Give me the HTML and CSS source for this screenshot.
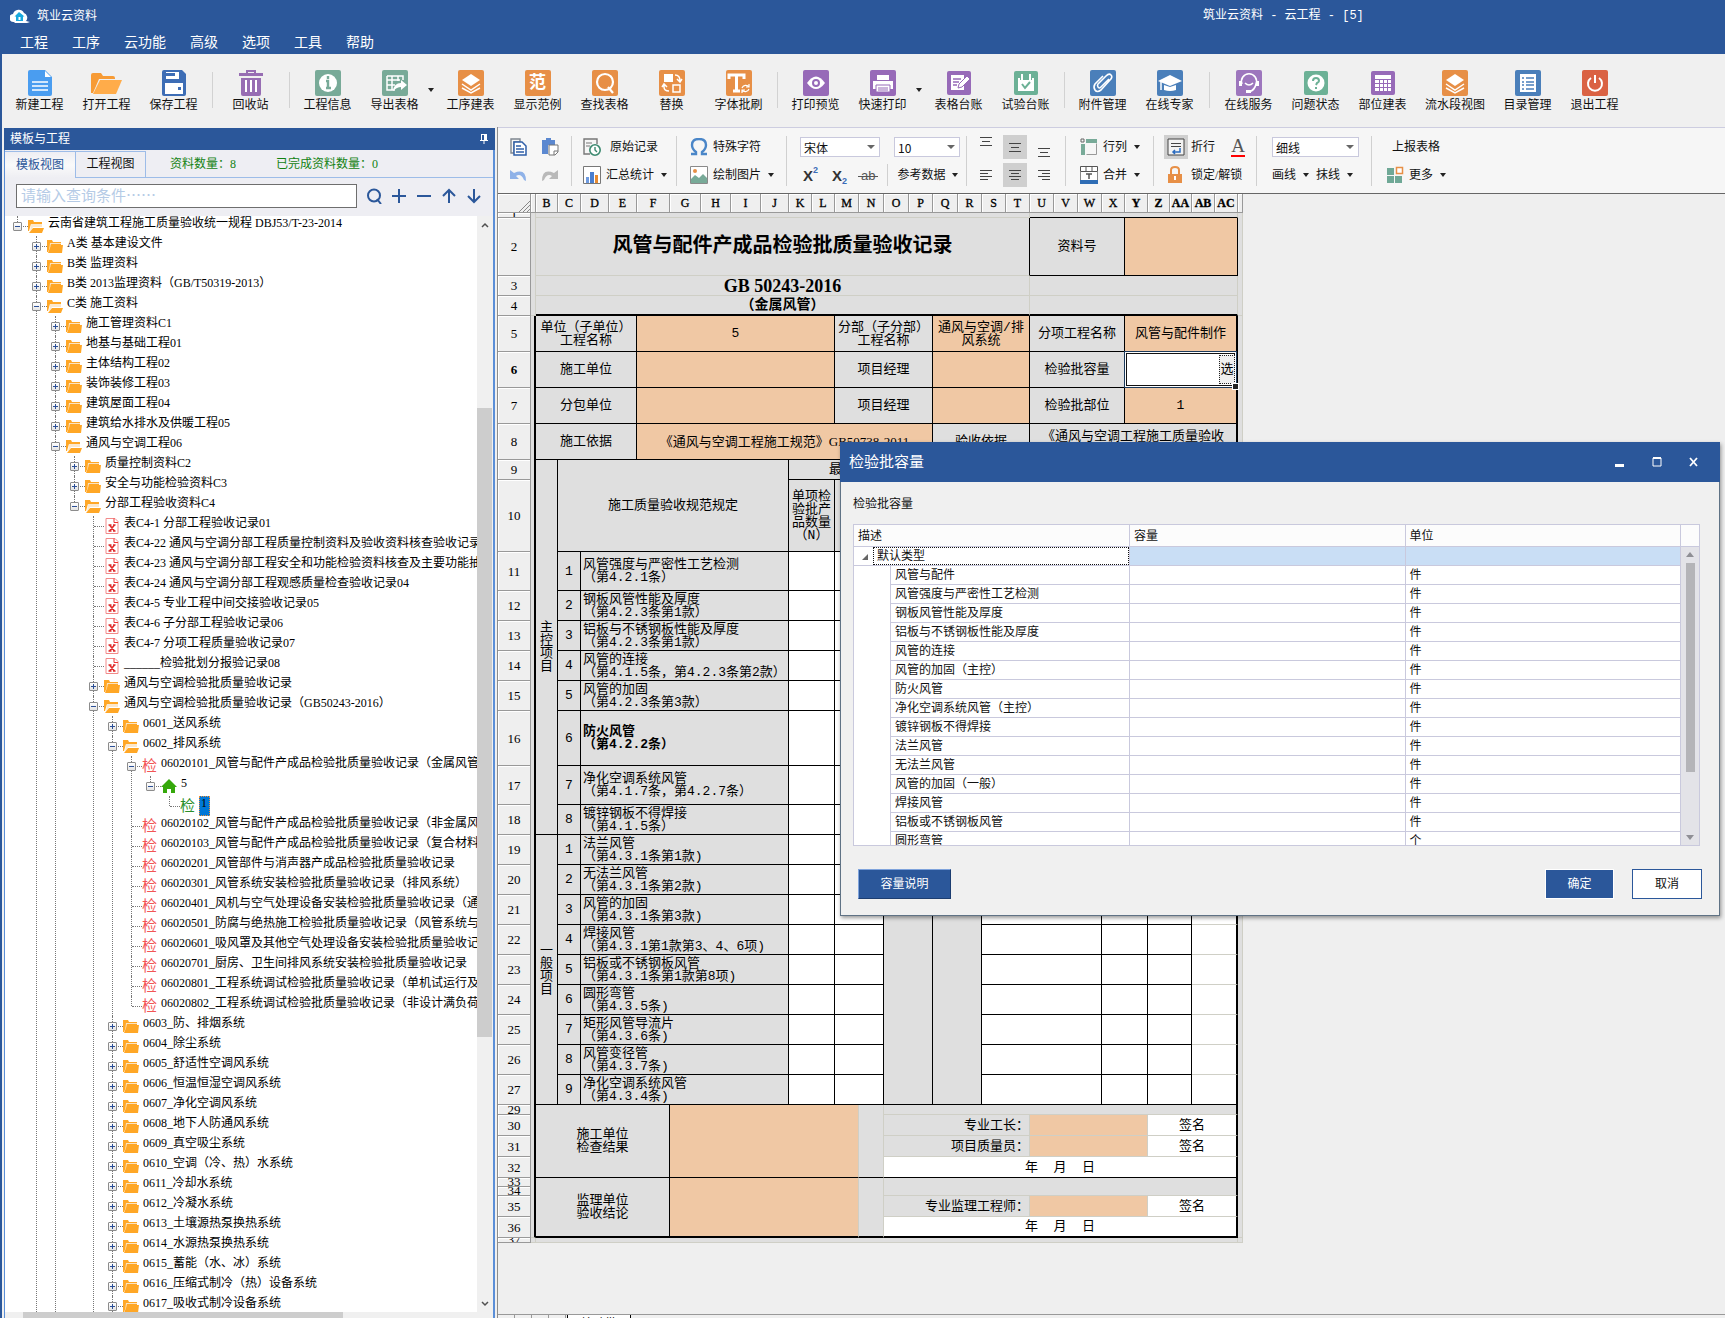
FILE: index.html
```html
<!DOCTYPE html>
<html lang="zh-CN">
<head>
<meta charset="utf-8">
<title>筑业云资料</title>
<link rel="stylesheet" href="styles.css">
</head>
<body>
<svg class="sprite" aria-hidden="true">
  <symbol id="closed" viewBox="0 0 16 14"><path d="M0 1h5l1 2h8v3H4L1 13H0z" fill="#ffa726"/><path d="M3 4h11v1H4L2 12z" fill="#fbe3bf"/><path d="M4 6h12l-1 8H1z" fill="#ffa726"/></symbol>
  <symbol id="open" viewBox="0 0 16 14"><path d="M0 1h5l1 2h8v2H3L1 12H0z" fill="#ffa726"/><path d="M3 5h11v3H5l-3 5z" fill="#fbe8cd"/><path d="M5 9h11l-2 5H1z" fill="#ffa726"/></symbol>
  <symbol id="xfile" viewBox="0 0 16 16"><path d="M2 .5h9l3 3v12H2z" fill="#fff" stroke="#f28a8a"/><path d="M10 .5v4h4" fill="none" stroke="#e33"/><path d="M5.500 7l5 6M10.500 7l-5 6M4.500 7h3M9 7h2.500M4.500 13h3M9 13h2.500" stroke="#e02a2a" stroke-width="1.600"/></symbol>
  <symbol id="home" viewBox="0 0 16 16"><path d="M8 1L0 9h2v6h4v-4h4v4h4V9h2z" fill="#35a80b"/></symbol>
</svg>

<header class="titlebar">
  <div class="caption">
    <svg class="logo" viewBox="0 0 20 15"><path d="M4 13a4 4 0 0 1-1-8 6 6 0 0 1 11-1 5 5 0 0 1 2 8l4 1-3 1H5z" fill="#fff"/><path d="M9 3L4.500 7.500H6V12h7V7.500h1.500z" fill="#19a9de"/><path d="M8.500 8h2v3h-2z" fill="#fff"/></svg>
    <span class="app">筑业云资料</span>
    <span class="doc">筑业云资料 - 云工程 - [5]</span>
  </div>
  <nav class="menu">
    <button>工程</button><button>工序</button><button>云功能</button><button>高级</button><button>选项</button><button>工具</button><button>帮助</button>
  </nav>
</header>

<div class="ribbon">
  <button class="tool"><svg viewBox="0 0 26 26"><path d="M1 2q0-2 2-2h15l7 7v17q0 2-2 2H3q-2 0-2-2z" fill="#4a9df0"/><path d="M18 1v6h6z" fill="#fff"/><path d="M5 12h16M5 16h16M5 20h16" stroke="#fff" stroke-width="1.500"/></svg>新建工程</button>
  <button class="tool"><svg class="wide" viewBox="0 0 32 26"><path d="M0 5q0-2 2-2h8l2 3h10q2 0 2 2v1H8L2 23H0z" fill="#f79b35"/><path d="M9 10h22l-6 14H2z" fill="#ffac4a"/></svg>打开工程</button>
  <button class="tool"><svg viewBox="0 0 26 26"><path d="M1 2q0-2 2-2h18l4 4v20q0 2-2 2H3q-2 0-2-2z" fill="#3d6db5"/><path d="M5 2h13v7H5zM4 13h18v11H4z" fill="#fff"/><path d="M5 3h9v3H5zM17 17h3v3h-3z" fill="#3d6db5"/></svg>保存工程</button>
  <i class="bar"></i>
  <button class="tool"><svg viewBox="0 0 26 26"><path d="M3 8h20v16q0 2-2 2H5q-2 0-2-2z" fill="#976db3"/><path d="M9 4V1h8v3" fill="none" stroke="#976db3" stroke-width="2"/><path d="M1 3h24v3H1z" fill="#976db3"/><path d="M8 10v12M13 10v12M18 10v12" stroke="#fff" stroke-width="2"/></svg>回收站</button>
  <i class="bar"></i>
  <button class="tool"><svg viewBox="0 0 26 26"><rect width="26" height="26" rx="2" fill="#78aa98"/><circle cx="13" cy="13" r="9" fill="#fff"/><path d="M13 6v3M11 11h2v7M11 18h5" stroke="#78aa98" stroke-width="2.400" fill="none"/></svg>工程信息</button>
  <button class="tool"><svg viewBox="0 0 26 26"><rect width="26" height="26" rx="2" fill="#78aa98"/><path d="M5 6h16v4M5 6v14h8M5 10h13M5 15h8M10 6v14M16 6v5" stroke="#fff" stroke-width="1.500" fill="none"/><path d="M11 21q1-8 8-8v-3l6 5-6 5v-3q-4 0-8 4z" fill="#fff"/></svg>导出表格</button>
  <i class="drop"></i>
  <button class="tool"><svg viewBox="0 0 26 26"><rect width="26" height="26" rx="2" fill="#e78f46"/><path d="M13 4l9 6-9 6-9-6z" fill="#fff"/><path d="M4 14l9 6 9-6M4 18l9 5 9-5" stroke="#fff" stroke-width="1.500" fill="none"/></svg>工序建表</button>
  <button class="tool"><span class="glyph">范</span>显示范例</button>
  <button class="tool"><svg viewBox="0 0 26 26"><rect width="26" height="26" rx="2" fill="#e78f46"/><circle cx="13" cy="12" r="8" fill="none" stroke="#fff" stroke-width="2.200"/><path d="M16 17l5 6" stroke="#fff" stroke-width="2.200"/></svg>查找表格</button>
  <button class="tool"><svg viewBox="0 0 26 26"><rect width="26" height="26" rx="2" fill="#e78f46"/><path d="M5 4h9v8H5z" fill="#fff"/><path d="M14 15h7v7h-7zM16 5q5 0 5 6M18 9l3 3 2-3M5 15v2q0 4 5 4M3 17l2-3 3 3" fill="none" stroke="#fff" stroke-width="1.500"/></svg>替换</button>
  <button class="tool"><svg viewBox="0 0 26 26"><rect width="26" height="26" rx="2" fill="#e78f46"/><path d="M3 9V5h15v4M10.500 5v16M7 21h7" fill="none" stroke="#fff" stroke-width="3"/><path d="M16 18a4 4 0 0 1 7-1M23 19a4 4 0 0 1-7 1M23 14v3h-3M16 23v-3h3" fill="none" stroke="#fff" stroke-width="1.200"/></svg>字体批刷</button>
  <i class="bar"></i>
  <button class="tool"><svg viewBox="0 0 26 26"><rect width="26" height="26" rx="2" fill="#976ab8"/><path d="M4 13q9-13 18 0-9 12-18 0z" fill="#fff"/><circle cx="13" cy="13" r="3" fill="#fff" stroke="#976ab8" stroke-width="2"/></svg>打印预览</button>
  <button class="tool"><svg viewBox="0 0 26 26"><rect width="26" height="26" rx="2" fill="#976ab8"/><path d="M7 5h12v5H7zM3 11h20v8H3z" fill="#fff"/><path d="M6 15h14v7H6z" fill="#fff" stroke="#976ab8"/><path d="M8 18h10M8 20h10" stroke="#976ab8"/></svg>快速打印</button>
  <i class="drop"></i>
  <button class="tool"><svg viewBox="0 0 26 26"><rect x="1" y="1" width="24" height="24" rx="2" fill="#976ab8"/><path d="M5 5h13v15H5z" fill="#fff"/><path d="M7 9h8M7 12h6M7 15h4" stroke="#976ab8" stroke-width="1.500"/><path d="M12 18l1-4 8-8 3 3-8 8z" fill="#fff" stroke="#976ab8"/></svg>表格台账</button>
  <button class="tool"><svg viewBox="0 0 26 26"><rect x="1" y="1" width="24" height="24" rx="2" fill="#6cb196"/><path d="M5 8h16v13H5z" fill="#fff"/><path d="M9 3v7M13 7v3M17 3v7" stroke="#6cb196" stroke-width="4"/><path d="M9 4v6M17 4v6" stroke="#fff" stroke-width="2"/><path d="M9 14l3 4 5-6" stroke="#6cb196" stroke-width="2" fill="none"/></svg>试验台账</button>
  <i class="bar"></i>
  <button class="tool"><svg viewBox="0 0 26 26"><rect width="26" height="26" rx="2" fill="#4a7fba"/><path d="M19 9l-8 8q-2 2-3 0t0-3l8-8q3-3 5-1t-1 5l-9 10q-4 3-6 0t0-6l8-8" fill="none" stroke="#fff" stroke-width="1.600"/></svg>附件管理</button>
  <button class="tool"><svg viewBox="0 0 26 26"><rect width="26" height="26" rx="2" fill="#4a7fba"/><path d="M13 5l12 6-12 5L1 11z" fill="#fff"/><path d="M7 15v5q6 2 12 0v-5l-6 2z" fill="#fff"/><path d="M4 12v8" stroke="#fff" stroke-width="1.500"/></svg>在线专家</button>
  <i class="bar late"></i>
  <button class="tool"><svg viewBox="0 0 26 26"><rect width="26" height="26" rx="2" fill="#9d76bd"/><path d="M6 14a7.500 7.500 0 1 1 14 0q-1 6-7 8M9 13q4 4 8 0" fill="none" stroke="#fff" stroke-width="1.600"/><path d="M3 11h3v5H3zM20 11h3v5h-3zM10 20h5v3h-5z" fill="#fff"/></svg>在线服务</button>
  <button class="tool"><svg viewBox="0 0 26 26"><rect x="1" y="1" width="24" height="24" rx="2" fill="#6cb196"/><circle cx="13" cy="13" r="8.500" fill="#fff"/><path d="M10 11q0-3 3-3t3 3q0 1-2 2l-1 2M13 17v2" fill="none" stroke="#6cb196" stroke-width="2"/></svg>问题状态</button>
  <button class="tool"><svg viewBox="0 0 26 26"><rect x="1" y="1" width="24" height="24" rx="2" fill="#976ab8"/><path d="M5 5h16v16H5z" fill="#fff"/><path d="M5 9.500h16M5 13.500h16M5 17.500h16M9.500 9v12M13.500 9v12M17.500 9v12" stroke="#976ab8"/></svg>部位建表</button>
  <button class="tool long"><svg viewBox="0 0 26 26"><rect width="26" height="26" rx="2" fill="#e78f46"/><path d="M13 4l9 6-9 6-9-6z" fill="#fff"/><path d="M4 14l9 6 9-6M4 18l9 5 9-5" stroke="#fff" stroke-width="1.500" fill="none"/></svg>流水段视图</button>
  <button class="tool"><svg viewBox="0 0 26 26"><rect width="26" height="26" rx="2" fill="#4a7fba"/><path d="M5 4h16v18H5z" fill="#fff"/><path d="M7 8h2M11 8h8M7 12h2M11 12h8M7 15h2M11 15h8M7 19h2M11 19h8" stroke="#4a7fba" stroke-width="1.500"/></svg>目录管理</button>
  <button class="tool"><svg viewBox="0 0 26 26"><rect width="26" height="26" rx="2" fill="#da6243"/><path d="M9 8a7 7 0 1 0 8 0M13 5v8" fill="none" stroke="#fff" stroke-width="2"/></svg>退出工程</button>
</div>

<main class="work">
<aside class="side">
  <h2 class="side-title">模板与工程<svg viewBox="0 0 8 10"><path d="M1 0h6v6H1zM0 6h8v1H0zM3.500 7h1v3h-1z" fill="#fff"/><path d="M2 1h2v5H2z" fill="#2b579a"/></svg></h2>
  <div class="tabs">
    <button class="tab on">模板视图</button><button class="tab">工程视图</button>
    <span class="count">资料数量：8</span><span class="count second">已完成资料数量：0</span>
  </div>
  <div class="search">
    <input type="text" placeholder="请输入查询条件……" aria-label="查询条件">
    <button aria-label="查找"><svg viewBox="0 0 16 16"><circle cx="8" cy="7.500" r="6" /><path d="M11 11l4 5"/></svg></button>
    <button aria-label="展开"><svg viewBox="0 0 16 16"><path d="M8 1v14M1 8h14"/></svg></button>
    <button aria-label="折叠"><svg viewBox="0 0 16 16"><path d="M1 8h14"/></svg></button>
    <button aria-label="上一个"><svg viewBox="0 0 16 16"><path d="M8 15V2M2 8l6-6 6 6"/></svg></button>
    <button aria-label="下一个"><svg viewBox="0 0 16 16"><path d="M8 1v13M2 8l6 6 6-6"/></svg></button>
  </div>
  <div class="treebox">
  <ul class="tree">
   <li class="end"><div class="row"><button class="tw"></button><svg><use href="#open"/></svg><span>云南省建筑工程施工质量验收统一规程 DBJ53/T-23-2014</span></div>
    <ul>
     <li><div class="row"><button class="tw plus"></button><svg><use href="#closed"/></svg><span>A类 基本建设文件</span></div></li>
     <li><div class="row"><button class="tw plus"></button><svg><use href="#closed"/></svg><span>B类 监理资料</span></div></li>
     <li><div class="row"><button class="tw plus"></button><svg><use href="#closed"/></svg><span>B类 2013监理资料（GB/T50319-2013）</span></div></li>
     <li><div class="row"><button class="tw"></button><svg><use href="#open"/></svg><span>C类 施工资料</span></div>
      <ul>
       <li><div class="row"><button class="tw plus"></button><svg><use href="#closed"/></svg><span>施工管理资料C1</span></div></li>
       <li><div class="row"><button class="tw plus"></button><svg><use href="#closed"/></svg><span>地基与基础工程01</span></div></li>
       <li><div class="row"><button class="tw plus"></button><svg><use href="#closed"/></svg><span>主体结构工程02</span></div></li>
       <li><div class="row"><button class="tw plus"></button><svg><use href="#closed"/></svg><span>装饰装修工程03</span></div></li>
       <li><div class="row"><button class="tw plus"></button><svg><use href="#closed"/></svg><span>建筑屋面工程04</span></div></li>
       <li><div class="row"><button class="tw plus"></button><svg><use href="#closed"/></svg><span>建筑给水排水及供暖工程05</span></div></li>
       <li><div class="row"><button class="tw"></button><svg><use href="#open"/></svg><span>通风与空调工程06</span></div>
        <ul>
         <li><div class="row"><button class="tw plus"></button><svg><use href="#closed"/></svg><span>质量控制资料C2</span></div></li>
         <li><div class="row"><button class="tw plus"></button><svg><use href="#closed"/></svg><span>安全与功能检验资料C3</span></div></li>
         <li class="end"><div class="row"><button class="tw"></button><svg><use href="#open"/></svg><span>分部工程验收资料C4</span></div>
          <ul>
           <li><div class="row"><svg><use href="#xfile"/></svg><span>表C4-1 分部工程验收记录01</span></div></li>
           <li><div class="row"><svg><use href="#xfile"/></svg><span>表C4-22 通风与空调分部工程质量控制资料及验收资料核查验收记录</span></div></li>
           <li><div class="row"><svg><use href="#xfile"/></svg><span>表C4-23 通风与空调分部工程安全和功能检验资料核查及主要功能抽查</span></div></li>
           <li><div class="row"><svg><use href="#xfile"/></svg><span>表C4-24 通风与空调分部工程观感质量检查验收记录04</span></div></li>
           <li><div class="row"><svg><use href="#xfile"/></svg><span>表C4-5 专业工程中间交接验收记录05</span></div></li>
           <li><div class="row"><svg><use href="#xfile"/></svg><span>表C4-6 子分部工程验收记录06</span></div></li>
           <li><div class="row"><svg><use href="#xfile"/></svg><span>表C4-7 分项工程质量验收记录07</span></div></li>
           <li><div class="row"><svg><use href="#xfile"/></svg><span>______检验批划分报验记录08</span></div></li>
           <li><div class="row"><button class="tw plus"></button><svg><use href="#closed"/></svg><span>通风与空调检验批质量验收记录</span></div></li>
           <li><div class="row"><button class="tw"></button><svg><use href="#open"/></svg><span>通风与空调检验批质量验收记录（GB50243-2016）</span></div>
            <ul>
             <li><div class="row"><button class="tw plus"></button><svg><use href="#closed"/></svg><span>0601_送风系统</span></div></li>
             <li><div class="row"><button class="tw"></button><svg><use href="#open"/></svg><span>0602_排风系统</span></div>
              <ul>
               <li><div class="row"><button class="tw"></button><i class="jian">检</i><span>06020101_风管与配件产成品检验批质量验收记录（金属风管）</span></div>
                <ul><li class="end"><div class="row"><button class="tw"></button><svg><use href="#home"/></svg><span>5</span></div>
                 <ul><li class="end"><div class="row"><i class="jian green">检</i><span class="picked">1</span></div></li></ul>
                </li></ul>
               </li>
               <li><div class="row"><i class="jian">检</i><span>06020102_风管与配件产成品检验批质量验收记录（非金属风管）</span></div></li>
               <li><div class="row"><i class="jian">检</i><span>06020103_风管与配件产成品检验批质量验收记录（复合材料风管）</span></div></li>
               <li><div class="row"><i class="jian">检</i><span>06020201_风管部件与消声器产成品检验批质量验收记录</span></div></li>
               <li><div class="row"><i class="jian">检</i><span>06020301_风管系统安装检验批质量验收记录（排风系统）</span></div></li>
               <li><div class="row"><i class="jian">检</i><span>06020401_风机与空气处理设备安装检验批质量验收记录（通风系统）</span></div></li>
               <li><div class="row"><i class="jian">检</i><span>06020501_防腐与绝热施工检验批质量验收记录（风管系统与设备）</span></div></li>
               <li><div class="row"><i class="jian">检</i><span>06020601_吸风罩及其他空气处理设备安装检验批质量验收记录</span></div></li>
               <li><div class="row"><i class="jian">检</i><span>06020701_厨房、卫生间排风系统安装检验批质量验收记录</span></div></li>
               <li><div class="row"><i class="jian">检</i><span>06020801_工程系统调试检验批质量验收记录（单机试运行及调试）</span></div></li>
               <li class="end"><div class="row"><i class="jian">检</i><span>06020802_工程系统调试检验批质量验收记录（非设计满负荷条件）</span></div></li>
              </ul>
             </li>
             <li><div class="row"><button class="tw plus"></button><svg><use href="#closed"/></svg><span>0603_防、排烟系统</span></div></li>
             <li><div class="row"><button class="tw plus"></button><svg><use href="#closed"/></svg><span>0604_除尘系统</span></div></li>
             <li><div class="row"><button class="tw plus"></button><svg><use href="#closed"/></svg><span>0605_舒适性空调风系统</span></div></li>
             <li><div class="row"><button class="tw plus"></button><svg><use href="#closed"/></svg><span>0606_恒温恒湿空调风系统</span></div></li>
             <li><div class="row"><button class="tw plus"></button><svg><use href="#closed"/></svg><span>0607_净化空调风系统</span></div></li>
             <li><div class="row"><button class="tw plus"></button><svg><use href="#closed"/></svg><span>0608_地下人防通风系统</span></div></li>
             <li><div class="row"><button class="tw plus"></button><svg><use href="#closed"/></svg><span>0609_真空吸尘系统</span></div></li>
             <li><div class="row"><button class="tw plus"></button><svg><use href="#closed"/></svg><span>0610_空调（冷、热）水系统</span></div></li>
             <li><div class="row"><button class="tw plus"></button><svg><use href="#closed"/></svg><span>0611_冷却水系统</span></div></li>
             <li><div class="row"><button class="tw plus"></button><svg><use href="#closed"/></svg><span>0612_冷凝水系统</span></div></li>
             <li><div class="row"><button class="tw plus"></button><svg><use href="#closed"/></svg><span>0613_土壤源热泵换热系统</span></div></li>
             <li><div class="row"><button class="tw plus"></button><svg><use href="#closed"/></svg><span>0614_水源热泵换热系统</span></div></li>
             <li><div class="row"><button class="tw plus"></button><svg><use href="#closed"/></svg><span>0615_蓄能（水、冰）系统</span></div></li>
             <li><div class="row"><button class="tw plus"></button><svg><use href="#closed"/></svg><span>0616_压缩式制冷（热）设备系统</span></div></li>
             <li><div class="row"><button class="tw plus"></button><svg><use href="#closed"/></svg><span>0617_吸收式制冷设备系统</span></div></li>
            </ul>
           </li>
          </ul>
         </li>
        </ul>
       </li>
      </ul>
     </li>
    </ul>
   </li>
  </ul>
  <div class="vscroll"><svg viewBox="0 0 8 6"><path d="M1 5l3-3 3 3"/></svg><i></i><svg viewBox="0 0 8 6"><path d="M1 1l3 3 3-3"/></svg></div>
  </div>
  <div class="hscroll"><i></i></div>
</aside>

<section class="editor">
  <div class="format">
    <div class="grp g1">
      <div class="line"><button aria-label="复制"><svg viewBox="0 0 18 18"><path d="M2 1h9v3H5v11H2z" fill="none" stroke="#7f8790" stroke-width="1.400"/><path d="M5 4h8l4 4v9H5z" fill="#fff" stroke="#2f5fa8" stroke-width="1.500"/><path d="M7 8h5M7 11h8M7 14h8" stroke="#2f5fa8" stroke-width="1.500"/></svg></button><button aria-label="粘贴"><svg viewBox="0 0 18 18"><path d="M1 2h4V0h5v2h4v5H7v9H1z" fill="#5b88d0"/><path d="M8 7h9v7l-3 3H8z" fill="#fff" stroke="#777"/><path d="M17 13h-4v4" fill="none" stroke="#777"/></svg></button></div>
      <div class="line"><button aria-label="撤消"><svg viewBox="0 0 18 18"><path d="M1 4v9h9l-3-3q5-3 8 4l2 1q0-13-12-8z" fill="#8fb2e8"/></svg></button><button aria-label="重做"><svg viewBox="0 0 18 18"><path d="M17 4v9H8l3-3q-5-3-8 4l-2 1q0-13 12-8z" fill="#b9b9b9"/></svg></button></div>
    </div>
    <div class="grp g2">
      <div class="line"><button><svg viewBox="0 0 18 18"><path d="M7 16H1V1h13v5" fill="none" stroke="#777" stroke-width="1.400"/><path d="M3 5h6M3 8h4" stroke="#777"/><circle cx="12" cy="12" r="5.200" fill="#fff" stroke="#3c8a70" stroke-width="1.600"/><path d="M12 9v3l2 2" stroke="#3c8a70" fill="none" stroke-width="1.400"/></svg><span class="far">原始记录</span></button></div>
      <div class="line"><button><svg viewBox="0 0 18 18"><path d="M.5.5h17v17H.5z" fill="#fff" stroke="#777"/><path d="M3 11h3v6H3z" fill="#6f9be0"/><path d="M7 6h4v11H7z" fill="#4a7fd0"/><path d="M12 9h3v8h-3z" fill="#e78a30"/></svg>汇总统计<i class="dd"></i></button></div>
    </div>
    <div class="grp g3">
      <div class="line"><button><svg viewBox="0 0 18 18"><path d="M1 16h5v-2Q2 11 2 7q0-6 7-6t7 6q0 4-4 7v2h5" fill="none" stroke="#4a86c8" stroke-width="2.400"/></svg>特殊字符</button></div>
      <div class="line"><button><svg viewBox="0 0 18 18"><path d="M.5.500h17v17H.5z" fill="#fff" stroke="#8a8a8a"/><path d="M1 13l4-4 4 3 4-4 4 4v5H1z" fill="#78aa98"/><circle cx="5" cy="5" r="2" fill="#e78f46"/></svg>绘制图片<i class="dd"></i></button></div>
    </div>
    <div class="grp g4">
      <div class="line"><span class="sel font"><select aria-label="字体"><option>宋体</option></select></span><span class="sel size"><select aria-label="字号"><option>10</option></select></span></div>
      <div class="line"><button class="xs">X<sup>2</sup></button><button class="xs">X<sub>2</sub></button><button class="ab">ab</button><button class="ref">参考数据<i class="dd"></i></button></div>
    </div>
    <div class="grp g5">
      <div class="line"><button class="al" aria-label="顶端对齐"><svg viewBox="0 0 24 24"><path d="M6 2.500h12M8 6.500h8M6 10.500h12"/></svg></button><button class="al act" aria-label="垂直居中"><svg viewBox="0 0 24 24"><path d="M6 8.500h12M8 12.500h8M6 16.500h12"/></svg></button><button class="al" aria-label="底端对齐"><svg viewBox="0 0 24 24"><path d="M6 13.500h12M8 17.500h8M6 21.500h12"/></svg></button></div>
      <div class="line"><button class="al" aria-label="左对齐"><svg viewBox="0 0 24 24"><path d="M6 7.500h12M6 10.500h8M6 13.500h12M6 16.500h8"/></svg></button><button class="al act" aria-label="居中"><svg viewBox="0 0 24 24"><path d="M6 7.500h12M8 10.500h8M6 13.500h12M8 16.500h8"/></svg></button><button class="al" aria-label="右对齐"><svg viewBox="0 0 24 24"><path d="M6 7.500h12M10 10.500h8M6 13.500h12M10 16.500h8"/></svg></button></div>
    </div>
    <div class="grp g6">
      <div class="line"><button><svg viewBox="0 0 18 18"><path d="M6 1h11v4H6zM1 6h4v11H1z" fill="#78aa98"/><path d="M1 1h3v3H1z" fill="none" stroke="#666"/><path d="M6.500 16.500h10v-11" fill="none" stroke="#999"/></svg>行列<i class="dd"></i></button></div>
      <div class="line"><button><svg viewBox="0 0 18 18"><path d="M.5.500h17v5H.5z" fill="#fff" stroke="#555"/><path d="M6 1v4M12 1v4" stroke="#555"/><path d="M.5 6v10h17V6" fill="#fff" stroke="#888"/><path d="M6 8h6M9 8v5" stroke="#555" stroke-width="1.500"/><path d="M0 14h18v4H0z" fill="#2f6db5"/></svg>合并<i class="dd"></i></button></div>
    </div>
    <div class="grp g7">
      <div class="line"><button class="wrap"><span class="al act"><svg viewBox="0 0 24 24"><path d="M4 4h16v16H4z" fill="#f2f2f2"/><path d="M7 8.500h10M7 11.500h10"/><path d="M16 13v4H9M11 15l-2 2 2 2" class="blue"/></svg></span>折行</button><button class="tc" aria-label="字体颜色">A</button></div>
      <div class="line"><button class="lock"><svg viewBox="0 0 18 18"><path d="M5 8V4q0-3 4-3t4 3v4" fill="none" stroke="#e78f46" stroke-width="2"/><path d="M2 8h14v9H2z" fill="#e78f46"/><path d="M8 10h2v4H8z" fill="#fff"/></svg>锁定/解锁</button></div>
    </div>
    <div class="grp g8">
      <div class="line"><span class="sel rule"><select aria-label="线型"><option>细线</option></select></span></div>
      <div class="line"><button>画线<i class="dd"></i></button><button>抹线<i class="dd"></i></button></div>
    </div>
    <div class="grp g9">
      <div class="line"><button class="up">上报表格</button></div>
      <div class="line"><button><svg viewBox="0 0 18 18"><path d="M1 2h7v7H1zM1 10h7v7H1zM9 10h7v7H9z" fill="#6fa896"/><path d="M10.500 1.500h6v6h-6z" fill="#fff" stroke="#e78f46" stroke-width="1.500"/></svg>更多<i class="dd"></i></button></div>
    </div>
  </div>

  <div class="canvas">
  <table class="sheet">
    <colgroup><col class="w33"><col class="w5"><col class="w22"><col class="w23"><col class="w28"><col class="w28"><col class="w33"><col class="w31"><col class="w30"><col class="w30"><col class="w28"><col class="w23"><col class="w23"><col class="w24"><col class="w25"><col class="w25"><col class="w24"><col class="w25"><col class="w24"><col class="w24"><col class="w24"><col class="w24"><col class="w24"><col class="w24"><col class="w23"><col class="w23"><col class="w22"><col class="w22"><col class="w23"><col class="w23"><col class="w5"></colgroup>
    <thead><tr class="h19"><th class="corner"><svg viewBox="0 0 12 12"><path d="M1 12L12 1M5 12l7-7M9 12l3-3" stroke="#888"/></svg></th><th></th><th>B</th><th>C</th><th>D</th><th>E</th><th>F</th><th>G</th><th>H</th><th>I</th><th>J</th><th>K</th><th>L</th><th>M</th><th>N</th><th>O</th><th>P</th><th>Q</th><th>R</th><th>S</th><th>T</th><th>U</th><th>V</th><th>W</th><th>X</th><th class="hot">Y</th><th class="hot">Z</th><th class="hot">AA</th><th class="hot">AB</th><th class="hot">AC</th><th></th></tr></thead>
    <tbody>
    <tr class="h5"><th><span class="clip">1</span></th><td rowspan="4" class="lt"></td><td colspan="19" class="lt"></td><td colspan="9" class="ltr"></td><td rowspan="4" class="lt"></td></tr>
    <tr class="h58"><th>2</th><td colspan="19" class="title ltb">风管与配件产成品检验批质量验收记录</td><td colspan="4">资料号</td><td colspan="5" class="o"></td></tr>
    <tr class="h20"><th>3</th><td colspan="19" class="std lt">GB 50243-2016</td><td colspan="9" class="lt"></td></tr>
    <tr class="h20"><th>4</th><td colspan="19" class="kind ltr thickb">（金属风管）</td><td colspan="9" class="ltr thickb"></td></tr>
    <tr class="h36"><th>5</th><td rowspan="31" class="lt thickr"></td><td colspan="4">单位（子单位）<br>工程名称</td><td colspan="7" class="o">5</td><td colspan="4">分部（子分部）<br>工程名称</td><td colspan="4" class="o">通风与空调/排<br>风系统</td><td colspan="4">分项工程名称</td><td colspan="5" class="o e">风管与配件制作</td><td rowspan="31" class="lt"></td></tr>
    <tr class="h36"><th class="hot">6</th><td colspan="4">施工单位</td><td colspan="7" class="o"></td><td colspan="4">项目经理</td><td colspan="4" class="o"></td><td colspan="4">检验批容量</td><td colspan="5" class="cur e"><div class="curbox"><input type="text" aria-label="检验批容量"><button>选</button></div></td></tr>
    <tr class="h36"><th>7</th><td colspan="4">分包单位</td><td colspan="7" class="o"></td><td colspan="4">项目经理</td><td colspan="4" class="o"></td><td colspan="4">检验批部位</td><td colspan="5" class="o e">1</td></tr>
    <tr class="h36"><th>8</th><td colspan="4">施工依据</td><td colspan="11" class="o srf">《通风与空调工程施工规范》GB50738-2011</td><td colspan="4">验收依据</td><td colspan="9" class="e srf">《通风与空调工程施工质量验收<br>规范》GB50243-2016</td></tr>
    <tr class="h20"><th>9</th><td rowspan="10">主<br>控<br>项<br>目</td><td colspan="8" rowspan="2">施工质量验收规范规定</td><td colspan="8">最小/实际抽样数量</td><td colspan="11" class="e"></td></tr>
    <tr class="h72"><th>10</th><td colspan="2">单项检<br>验批产<br>品数量<br>（N）</td><td colspan="2"></td><td colspan="2"></td><td colspan="2"></td><td colspan="5"></td><td colspan="2"></td><td colspan="2"></td><td colspan="2" class="e"></td></tr>
    <tr class="h39"><th>11</th><td>1</td><td colspan="7" class="d">风管强度与严密性工艺检测<br>（第4.2.1条）</td><td colspan="2" class="w"></td><td colspan="2" class="w"></td><td colspan="2" rowspan="8"></td><td colspan="2" rowspan="8"></td><td colspan="5" class="w"></td><td colspan="2" class="w"></td><td colspan="2" class="w"></td><td colspan="2" class="w ltb e"></td></tr>
    <tr class="h30"><th>12</th><td>2</td><td colspan="7" class="d">钢板风管性能及厚度<br>（第4.2.3条第1款）</td><td colspan="2" class="w"></td><td colspan="2" class="w"></td><td colspan="5" class="w"></td><td colspan="2" class="w"></td><td colspan="2" class="w"></td><td colspan="2" class="w ltb e"></td></tr>
    <tr class="h30"><th>13</th><td>3</td><td colspan="7" class="d">铝板与不锈钢板性能及厚度<br>（第4.2.3条第1款）</td><td colspan="2" class="w"></td><td colspan="2" class="w"></td><td colspan="5" class="w"></td><td colspan="2" class="w"></td><td colspan="2" class="w"></td><td colspan="2" class="w ltb e"></td></tr>
    <tr class="h30"><th>14</th><td>4</td><td colspan="7" class="d">风管的连接<br>（第4.1.5条，第4.2.3条第2款）</td><td colspan="2" class="w"></td><td colspan="2" class="w"></td><td colspan="5" class="w"></td><td colspan="2" class="w"></td><td colspan="2" class="w"></td><td colspan="2" class="w ltb e"></td></tr>
    <tr class="h30"><th>15</th><td>5</td><td colspan="7" class="d">风管的加固<br>（第4.2.3条第3款）</td><td colspan="2" class="w"></td><td colspan="2" class="w"></td><td colspan="5" class="w"></td><td colspan="2" class="w"></td><td colspan="2" class="w"></td><td colspan="2" class="w ltb e"></td></tr>
    <tr class="h55"><th>16</th><td>6</td><td colspan="7" class="d strong">防火风管<br>（第4.2.2条）</td><td colspan="2" class="w"></td><td colspan="2" class="w"></td><td colspan="5" class="w"></td><td colspan="2" class="w"></td><td colspan="2" class="w"></td><td colspan="2" class="w ltb e"></td></tr>
    <tr class="h39"><th>17</th><td>7</td><td colspan="7" class="d">净化空调系统风管<br>（第4.1.7条，第4.2.7条）</td><td colspan="2" class="w"></td><td colspan="2" class="w"></td><td colspan="5" class="w"></td><td colspan="2" class="w"></td><td colspan="2" class="w"></td><td colspan="2" class="w ltb e"></td></tr>
    <tr class="h30"><th>18</th><td>8</td><td colspan="7" class="d">镀锌钢板不得焊接<br>（第4.1.5条）</td><td colspan="2" class="w"></td><td colspan="2" class="w"></td><td colspan="5" class="w"></td><td colspan="2" class="w"></td><td colspan="2" class="w"></td><td colspan="2" class="w ltb e"></td></tr>
    <tr class="h30"><th>19</th><td rowspan="9">一<br>般<br>项<br>目</td><td>1</td><td colspan="7" class="d">法兰风管<br>（第4.3.1条第1款)</td><td colspan="2" class="w"></td><td colspan="2" class="w"></td><td colspan="2" rowspan="9"></td><td colspan="2" rowspan="9"></td><td colspan="5" class="w"></td><td colspan="2" class="w"></td><td colspan="2" class="w"></td><td colspan="2" class="w ltb e"></td></tr>
    <tr class="h30"><th>20</th><td>2</td><td colspan="7" class="d">无法兰风管<br>（第4.3.1条第2款)</td><td colspan="2" class="w"></td><td colspan="2" class="w"></td><td colspan="5" class="w"></td><td colspan="2" class="w"></td><td colspan="2" class="w"></td><td colspan="2" class="w ltb e"></td></tr>
    <tr class="h30"><th>21</th><td>3</td><td colspan="7" class="d">风管的加固<br>（第4.3.1条第3款)</td><td colspan="2" class="w"></td><td colspan="2" class="w"></td><td colspan="5" class="w"></td><td colspan="2" class="w"></td><td colspan="2" class="w"></td><td colspan="2" class="w ltb e"></td></tr>
    <tr class="h30"><th>22</th><td>4</td><td colspan="7" class="d">焊接风管<br>（第4.3.1第1款第3、4、6项)</td><td colspan="2" class="w"></td><td colspan="2" class="w"></td><td colspan="5" class="w"></td><td colspan="2" class="w"></td><td colspan="2" class="w"></td><td colspan="2" class="w ltb e"></td></tr>
    <tr class="h30"><th>23</th><td>5</td><td colspan="7" class="d">铝板或不锈钢板风管<br>（第4.3.1条第1款第8项)</td><td colspan="2" class="w"></td><td colspan="2" class="w"></td><td colspan="5" class="w"></td><td colspan="2" class="w"></td><td colspan="2" class="w"></td><td colspan="2" class="w ltb e"></td></tr>
    <tr class="h30"><th>24</th><td>6</td><td colspan="7" class="d">圆形弯管<br>（第4.3.5条)</td><td colspan="2" class="w"></td><td colspan="2" class="w"></td><td colspan="5" class="w"></td><td colspan="2" class="w"></td><td colspan="2" class="w"></td><td colspan="2" class="w ltb e"></td></tr>
    <tr class="h30"><th>25</th><td>7</td><td colspan="7" class="d">矩形风管导流片<br>（第4.3.6条)</td><td colspan="2" class="w"></td><td colspan="2" class="w"></td><td colspan="5" class="w"></td><td colspan="2" class="w"></td><td colspan="2" class="w"></td><td colspan="2" class="w ltb e"></td></tr>
    <tr class="h30"><th>26</th><td>8</td><td colspan="7" class="d">风管变径管<br>（第4.3.7条)</td><td colspan="2" class="w"></td><td colspan="2" class="w"></td><td colspan="5" class="w"></td><td colspan="2" class="w"></td><td colspan="2" class="w"></td><td colspan="2" class="w ltb e"></td></tr>
    <tr class="h30"><th>27</th><td>9</td><td colspan="7" class="d">净化空调系统风管<br>（第4.3.4条)</td><td colspan="2" class="w"></td><td colspan="2" class="w"></td><td colspan="5" class="w"></td><td colspan="2" class="w"></td><td colspan="2" class="w"></td><td colspan="2" class="w e"></td></tr>
    <tr class="h10"><th><span class="clip">29</span></th><td colspan="5" rowspan="4">施工单位<br>检查结果</td><td colspan="7" rowspan="4" class="o ltr"></td><td rowspan="4" class="ltr"></td><td colspan="15" class="ltb e"></td></tr>
    <tr class="h21"><th>30</th><td colspan="6" class="lt right">专业工长：</td><td colspan="5" class="o lt"></td><td colspan="4" class="w ltb e">签名</td></tr>
    <tr class="h21"><th>31</th><td colspan="6" class="lt right">项目质量员：</td><td colspan="5" class="o lt"></td><td colspan="4" class="w ltb e">签名</td></tr>
    <tr class="h21"><th>32</th><td colspan="15" class="w e">年&nbsp; 月&nbsp; 日</td></tr>
    <tr class="h9"><th><span class="clip">33</span></th><td colspan="5" rowspan="4" class="thickb">监理单位<br>验收结论</td><td colspan="7" rowspan="4" class="o ltr thickb"></td><td rowspan="4" class="ltr thickb"></td><td colspan="15" rowspan="2" class="ltb e"></td></tr>
    <tr class="h9"><th><span class="clip">34</span></th></tr>
    <tr class="h21"><th>35</th><td colspan="6" class="lt right">专业监理工程师：</td><td colspan="5" class="o lt"></td><td colspan="4" class="w ltb e">签名</td></tr>
    <tr class="h21"><th>36</th><td colspan="15" class="w thickb e">年&nbsp; 月&nbsp; 日</td></tr>
    <tr class="h5"><th><span class="clip">37</span></th><td class="lt"></td><td colspan="28" class="lt"></td><td class="lt"></td></tr>
    </tbody>
  </table>
  </div>
  <div class="sheettabs"><i></i><i></i><i></i><i></i><button>检验批</button></div>
</section>
</main>

<div class="dialog" role="dialog" aria-labelledby="dlg">
  <header><h2 id="dlg">检验批容量</h2>
    <button aria-label="最小化"><svg viewBox="0 0 12 12"><path d="M1 8h9v3H1z" fill="#fff"/></svg></button>
    <button aria-label="最大化"><svg viewBox="0 0 12 12"><path d="M2 2h8v8H2z" fill="none" stroke="#fff"/><path d="M2 1h8v2H2z" fill="#fff"/></svg></button>
    <button aria-label="关闭"><svg viewBox="0 0 12 12"><path d="M2 2l7 8M9 2l-7 8" stroke="#fff" stroke-width="1.800"/></svg></button>
  </header>
  <p>检验批容量</p>
  <div class="listbox">
    <div class="clipbox">
    <table class="list">
      <colgroup><col class="c1"><col class="c2"><col><col></colgroup>
      <thead><tr><th colspan="2">描述</th><th>容量</th><th>单位</th></tr></thead>
      <tbody>
      <tr class="group"><td class="gname" colspan="2"><i class="tri"></i><span>默认类型</span></td><td></td><td></td></tr>
      <tr><td class="pad"></td><td>风管与配件</td><td></td><td>件</td></tr>
      <tr><td class="pad"></td><td>风管强度与严密性工艺检测</td><td></td><td>件</td></tr>
      <tr><td class="pad"></td><td>钢板风管性能及厚度</td><td></td><td>件</td></tr>
      <tr><td class="pad"></td><td>铝板与不锈钢板性能及厚度</td><td></td><td>件</td></tr>
      <tr><td class="pad"></td><td>风管的连接</td><td></td><td>件</td></tr>
      <tr><td class="pad"></td><td>风管的加固（主控）</td><td></td><td>件</td></tr>
      <tr><td class="pad"></td><td>防火风管</td><td></td><td>件</td></tr>
      <tr><td class="pad"></td><td>净化空调系统风管（主控）</td><td></td><td>件</td></tr>
      <tr><td class="pad"></td><td>镀锌钢板不得焊接</td><td></td><td>件</td></tr>
      <tr><td class="pad"></td><td>法兰风管</td><td></td><td>件</td></tr>
      <tr><td class="pad"></td><td>无法兰风管</td><td></td><td>件</td></tr>
      <tr><td class="pad"></td><td>风管的加固（一般）</td><td></td><td>件</td></tr>
      <tr><td class="pad"></td><td>焊接风管</td><td></td><td>件</td></tr>
      <tr><td class="pad"></td><td>铝板或不锈钢板风管</td><td></td><td>件</td></tr>
      <tr><td class="pad"></td><td>圆形弯管</td><td></td><td>个</td></tr>
      </tbody>
    </table>
    </div>
    <div class="listscroll"><b></b><div><i class="u"></i><em></em><i class="n"></i></div></div>
  </div>
  <footer><button class="raised">容量说明</button><button class="ok">确定</button><button class="cancel">取消</button></footer>
</div>
</body>
</html>
```
FILE: styles.css
```css
* { box-sizing: border-box; }
body { margin: 0; height: 100vh; display: flex; flex-direction: column; overflow: hidden; background: #f0f0f0; color: #111; font: 12px/16px "Liberation Serif", "Noto Sans CJK SC", sans-serif; }
button { border: 0; padding: 0; margin: 0; background: none; font: inherit; color: inherit; white-space: nowrap; }
ul { list-style: none; margin: 0; padding: 0; }
h2, p { margin: 0; font: inherit; }
.sprite { width: 0; height: 0; position: absolute; }

/* title and menu */
.titlebar { background: #2b579a; color: #fff; height: 54px; flex: none; }
.caption { display: grid; grid-template-columns: 20px 1fr 522px; align-items: center; column-gap: 7px; height: 32px; padding-left: 10px; }
.logo { width: 20px; height: 15px; }
.doc { font-family: "Liberation Mono", "Noto Sans CJK SC", monospace; }
.menu { display: flex; gap: 24px; padding-left: 20px; font-size: 14px; line-height: 21px; }

/* ribbon */
.ribbon { display: flex; flex: none; height: 74px; padding: 16px 0 0 4px; border-left: 2px solid #2b579a; }
.tool { width: 67px; height: 45px; display: flex; flex-direction: column; align-items: center; line-height: 19px; }
.tool.long { width: 78px; }
.tool svg { width: 26px; height: 26px; flex: none; }
.tool svg.wide { width: 32px; }
.glyph { width: 26px; height: 26px; border-radius: 2px; background: #e78f46; color: #fff; font-size: 17px; line-height: 25px; font-weight: bold; }
.bar { width: 1px; height: 36px; margin: 2px 4px 0 5px; background: #d2d2d2; }
.bar.late { margin-right: 5px; margin-left: 6px; }
.drop { width: 9px; padding-top: 18px; }
.drop::before, .dd { content: ""; display: block; border: 3px solid transparent; border-top: 4px solid #222; border-bottom: 0; width: 0; }

/* work area */
.work { flex: 1; min-height: 0; display: grid; grid-template-columns: 493px 1fr; column-gap: 2px; border-left: 2px solid #2b579a; margin-top: -1px; }
.side { margin: 1px 0 0 2px; display: flex; flex-direction: column; min-height: 0; background: #eeeef3; }
.side-title { display: flex; align-items: center; justify-content: space-between; height: 22px; flex: none; padding: 0 7px 0 6px; background: #2b579a; color: #fff; }
.side-title svg { width: 8px; height: 10px; }
.tabs, .search, .treebox, .hscroll { border: solid #5b8fd8; border-width: 0 2px 0 1px; }
.tabs { display: flex; height: 28px; flex: none; padding-top: 1px; background: linear-gradient(#9dbce8, #9dbce8) 0 100% / 100% 1px no-repeat; }
.tab { border: 1px solid #9dbce8; border-left: 0; width: 70px; height: 27px; line-height: 25px; text-align: center; color: #111; }
.tab.on { width: 71px; border-bottom: 0; color: #2b579a; background: linear-gradient(#eeeef3, #fafafa, #eeeef3); }
.count { color: #128212; line-height: 27px; margin-left: 24px; }
.count.second { margin-left: 40px; }
.search { display: flex; align-items: center; flex: none; height: 38px; padding: 0 11px 2px; gap: 9px; }
.search input { flex: 1; min-width: 0; height: 24px; border: 1px solid #6e6e6e; background: #fff; padding: 0 4px 3px; font: 15px "Noto Sans CJK SC", sans-serif; border-radius: 0; }
.search input::placeholder { color: #b5cbe6; }
.search button { width: 16px; height: 16px; }
.search svg { display: block; width: 16px; height: 16px; fill: none; stroke: #2b579a; stroke-width: 2; }
.treebox { flex: 1; min-height: 0; display: flex; overflow: hidden; background: #fff; }
.tree { flex: 1; min-width: 0; overflow: hidden; padding-left: 3px; color: #000; }
.tree ul { padding-left: 19px; }
.tree li { position: relative; }
.tree li::before { content: ""; position: absolute; left: 9px; top: 0; bottom: 0; border-left: 1px dotted #777; }
.tree li.end::before { bottom: auto; height: 10px; }
.row { position: relative; display: flex; height: 20px; padding-left: 20px; white-space: nowrap; }
.row::before { content: ""; position: absolute; left: 10px; top: 10px; width: 10px; border-top: 1px dotted #777; }
.row svg { width: 16px; height: 16px; flex: none; margin: 2px 4px 0 0; }
.row span { line-height: 14px; }
.tw { position: relative; flex: none; width: 9px; height: 9px; margin: 6px 6px 0 -15px; border: 1px solid #8c8c8c; border-radius: 1px; background: linear-gradient(#2b4f96, #2b4f96) 50% 50% / 5px 1px no-repeat, linear-gradient(#fff, #e4e4e4); }
.tw.plus { background: linear-gradient(#2b4f96, #2b4f96) 50% 50% / 5px 1px no-repeat, linear-gradient(#2b4f96, #2b4f96) 50% 50% / 1px 5px no-repeat, linear-gradient(#fff, #e4e4e4); }
.jian { width: 16px; margin-right: 3px; flex: none; font: 15px/18px "Noto Sans CJK SC", sans-serif; color: #f25555; }
.jian.green { color: #2a8f2a; }
.row .picked { width: 11px; height: 20px; padding-left: 2px; background: #0078d7; outline: 1px dotted #f0913a; outline-offset: -1px; }
.vscroll { width: 16px; flex: none; background: #f0f0f0; display: flex; flex-direction: column; align-items: center; padding: 6px 1px 5px 0; }
.vscroll svg { width: 8px; height: 6px; fill: none; stroke: #505050; stroke-width: 1.5; }
.vscroll i { width: 15px; height: 58%; margin: 180px 0 auto; background: #cdcdcd; }
.hscroll { height: 6px; flex: none; background: #f0f0f0; padding-left: 18px; }
.hscroll i { display: block; width: 68%; height: 6px; background: #cdcdcd; }

/* format bar */
.editor { display: flex; flex-direction: column; min-width: 0; min-height: 0; border-left: 1px solid #8c8c8c; }
.format { display: flex; flex: none; height: 66px; padding-top: 5px; background: #f6f6f6; border-top: 1px solid #cdcde0; }
.grp { height: 56px; padding-left: 12px; background: linear-gradient(#d0d0d0, #d0d0d0) 0 50% / 1px 50px no-repeat; }
.line { display: flex; align-items: center; height: 28px; }
.line button { display: flex; align-items: center; }
.line svg { width: 18px; height: 18px; margin-right: 5px; flex: none; }
.line .far { margin-left: 4px; }
.dd { margin-left: 7px; }
.g1 { width: 73px; padding-left: 11px; background: none; }
.g1 button + button { margin-left: 9px; }
.g2 { width: 105px; }
.g3 { width: 110px; padding-left: 14px; }
.g4 { width: 180px; padding-left: 14px; }
.g5 { width: 99px; padding-left: 8px; }
.g6 { width: 88px; padding-left: 15px; }
.g7 { width: 103px; padding-left: 11px; }
.g8 { width: 115px; padding-left: 16px; }
.g9 { padding-left: 15px; }
.sel { position: relative; height: 20px; }
.sel::after { content: ""; position: absolute; right: 5px; top: 8px; border: 4px solid transparent; border-top: 4px solid #666; border-bottom: 0; pointer-events: none; }
.sel select { appearance: none; width: 100%; height: 20px; border: 1px solid #c9c9dd; border-radius: 0; background: #fff; padding: 0 3px; font: 12px "Noto Sans CJK SC", sans-serif; color: #111; }
.font { width: 80px; margin-right: 14px; }
.size { width: 66px; }
.rule { width: 87px; }
.line .xs { width: 29px; padding-left: 3px; font: bold 15px "Liberation Sans", sans-serif; color: #333; }
.xs sup, .xs sub { font-size: 9px; font-weight: bold; color: #3a6cb8; line-height: 10px; }
.xs sup { margin-bottom: 10px; }
.xs sub { margin-top: 12px; }
.line .ab { font: 13px "Liberation Sans", sans-serif; padding: 0 3px; color: #555; background: linear-gradient(#555, #555) 50% 60% / 100% 1px no-repeat; margin-right: 9px; }
.ref { border-left: 1px solid #d0d0d0; height: 22px; }
.line .ref { padding-left: 9px; }
.al { width: 24px; height: 24px; flex: none; }
.al + .al { margin-left: 5px; }
.act { background: #cfcfcf; }
.line .al svg { width: 24px; height: 24px; margin: 0; stroke: #444; fill: none; display: block; }
.al .blue { stroke: #2b6cc0; stroke-width: 1.5; }
.wrap .al { margin-right: 3px; }
.line .tc { margin-left: 16px; font: 19px/18px "Liberation Serif", serif; color: #555; width: 14px; justify-content: center; border-bottom: 2px solid #f00; }
.line .lock svg { margin-left: 2px; margin-right: 7px; }
.g8 button + button { margin-left: 7px; }
.line .up { padding-left: 6px; }

/* spreadsheet */
.canvas { flex: 1; min-height: 0; overflow: hidden; border-top: 1px solid #666; background: #efefef; }
.sheet { width: 745px; table-layout: fixed; border-collapse: separate; border-spacing: 0; color: #000; font: 13px/13px "Liberation Mono", "Noto Sans CJK SC", monospace; }
.w5 { width: 5px; } .w22 { width: 22px; } .w23 { width: 23px; } .w24 { width: 24px; } .w25 { width: 25px; } .w28 { width: 28px; } .w30 { width: 30px; } .w31 { width: 31px; } .w33 { width: 33px; }
.h5 { height: 5px; } .h9 { height: 9px; } .h10 { height: 10px; } .h19 { height: 19px; } .h20 { height: 20px; } .h21 { height: 21px; } .h30 { height: 30px; } .h36 { height: 36px; } .h39 { height: 39px; } .h55 { height: 55px; } .h58 { height: 58px; } .h72 { height: 72px; }
.sheet th { padding: 0; font: 13px/13px "Liberation Serif", serif; background: #efefef; border: solid #999; border-width: 0 1px 1px 0; box-shadow: inset 1px 1px #fff; }
.sheet thead th { font-size: 12px; -webkit-text-stroke: 0.3px #000; }
.sheet th.hot { font-weight: bold; }
.corner { text-align: right; }
.corner svg { width: 12px; height: 12px; display: block; margin-left: auto; margin-top: 5px; }
.clip { display: block; overflow: hidden; height: 8px; line-height: 8px; }
.h5 .clip { height: 4px; line-height: 4px; }
.sheet td { padding: 0; text-align: center; vertical-align: middle; white-space: nowrap; background: #dfdfdf; border: solid #000; border-width: 0 1px 1px 0; }
.sheet .o { background: #f0c8a4; }
.sheet .w { background: #fff; }
.sheet .lt { border-color: #cfcfc6; }
.sheet .ltr { border-right-color: #cfcfc6; }
.sheet .ltb { border-bottom-color: #cfcfc6; }
.sheet .thickb { border-bottom: 2px solid #000; }
.sheet .thickr { border-right: 2px solid #000; }
.sheet .e { border-right: 2px solid #000; }
.sheet .d { text-align: left; padding-left: 2px; }
.sheet .right { text-align: right; }
.sheet .srf { font-family: "Liberation Serif", "Noto Sans CJK SC", serif; }
.sheet .strong { font-weight: bold; }
.sheet .title { font-size: 20px; line-height: 24px; font-weight: bold; }
.sheet .std { font: bold 18px/18px "Liberation Serif", serif; }
.sheet .kind { font-size: 14px; font-weight: bold; }
.sheet td.cur { background: #fff; }
.curbox { position: relative; display: flex; height: 35px; outline: 1px solid #1b3a5c; border: 1px solid #fff; box-shadow: inset 0 0 0 1px #111; padding: 2px 0 2px 2px; }
.curbox::after { content: ""; position: absolute; right: -4px; bottom: -4px; width: 5px; height: 5px; background: #222; border: 1px solid #fff; }
.curbox input { flex: 1; min-width: 0; border: 0; padding: 0; background: none; }
.curbox button { width: 16px; background: #efefef; outline: 1px dotted #222; outline-offset: -1px; }
.sheettabs { display: flex; flex: none; height: 4px; overflow: hidden; background: #f0f0f0; border-top: 1px solid #999; }
.sheettabs i { width: 17px; border-right: 1px solid #999; }
.sheettabs button { width: 64px; height: 18px; line-height: 14px; margin-left: 1px; background: #fff; border: solid #000; border-width: 0 1px; flex: none; }

/* capacity dialog */
.dialog { position: absolute; right: 5px; top: 442px; width: 880px; height: 474px; display: flex; flex-direction: column; background: #f0f0f0; border: 1px solid #5f7285; border-top: 0; box-shadow: 1px 2px 4px rgba(0, 0, 0, .4); }
.dialog header { display: flex; align-items: center; height: 40px; flex: none; margin: 0 -1px; padding: 0 20px 0 9px; gap: 25px; background: #2b579a; color: #fff; }
.dialog h2 { flex: 1; font-size: 15px; }
.dialog header svg { display: block; width: 12px; height: 12px; }
.dialog p { padding: 14px 0 0 12px; height: 42px; flex: none; }
.listbox { display: flex; flex: none; height: 322px; margin: 0 19px 0 12px; border: 1px solid #c9c9dd; background: #fff; overflow: hidden; }
.clipbox { flex: 1; overflow: hidden; }
.list { width: 100%; table-layout: fixed; border-collapse: separate; border-spacing: 0; }
.c1 { width: 37px; } .c2 { width: 239px; }
.list th, .list td { height: 19px; padding: 1px 3px 0 4px; text-align: left; font-weight: normal; line-height: 15px; border: solid #c9c9dd; border-width: 0 1px 1px 0; }
.list th { height: 22px; background: #fcfcfc; }
.list td.pad { border-bottom: 0; }
.list .group td { background: #c9def5; }
.list .group td.gname { padding: 0 0 0 19px; background: #fff; position: relative; }
.gname span { display: block; height: 18px; padding: 1px 3px; border: 1px dotted #111; }
.tri { position: absolute; left: 8px; top: 7px; border: solid transparent; border-width: 0 0 6px 6px; border-bottom-color: #666; }
.listscroll { width: 18px; display: flex; flex-direction: column; }
.listscroll b { height: 22px; background: #fcfcfc; border-bottom: 1px solid #c9c9dd; }
.listscroll div { flex: 1; display: flex; flex-direction: column; align-items: center; background: #e3e3e8; padding: 5px 0; }
.listscroll em { width: 9px; height: 209px; background: #b4b4b8; margin: 6px 0 auto; }
.u, .n { border: 4px solid transparent; }
.u { border-top: 0; border-bottom: 5px solid #8f8f95; }
.n { border-bottom: 0; border-top: 5px solid #8f8f95; }
.dialog footer { display: flex; gap: 18px; padding: 23px 17px 0; line-height: 28px; text-align: center; }
.dialog footer button { height: 30px; border: 1px solid; }
.dialog footer .raised { width: 93px; background: #2b579a; color: #fff; border-color: #7fa3dc #1c3d70 #1c3d70 #7fa3dc; }
.dialog footer .ok { width: 69px; margin-left: auto; color: #fff; background: #2b579a; border-color: #fff; }
.dialog footer .cancel { width: 70px; background: #fff; border-color: #2b579a; }
```
